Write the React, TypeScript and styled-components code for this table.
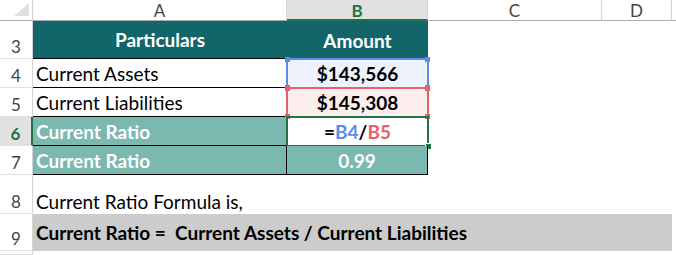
import React from 'react';
import styled, { createGlobalStyle } from 'styled-components';

const GlobalStyle = createGlobalStyle`
  html, body {
    margin: 0;
    padding: 0;
    background: #ffffff;
  }
  body {
    font-family: Lato, "Noto Sans", sans-serif;
  }
`;

const GREEN = '#217346';
const BLUE = '#5b8def';
const RED = '#e8616a';
const DARK_TEAL = '#12666a';
const LIGHT_TEAL = '#7ab8b0';

const Sheet = styled.div`
  display: grid;
  grid-template-columns: 33px 254px 141px 174px 70px 1fr;
  grid-template-rows: 21px 38px 29px 29px 29px 29px 39px 37px 1fr;
  width: 676px;
  height: 255px;
  overflow: hidden;
  font-size: 19px;
  color: #000;
`;

const Corner = styled.div`
  box-sizing: border-box;
  border-right: 1px solid #d4d4d4;
  border-bottom: 1px solid #ababab;
  display: flex;
  align-items: flex-end;
  justify-content: flex-end;
  padding: 0 3px 4px 0;
`;

const ColHeader = styled.div<{ $active?: boolean; $last?: boolean }>`
  box-sizing: border-box;
  display: flex;
  align-items: center;
  justify-content: center;
  background: ${p => (p.$active ? '#e1e1e1' : '#ffffff')};
  border-right: ${p => (p.$last ? 'none' : '1px solid #d4d4d4')};
  border-bottom: ${p => (p.$active ? `2px solid ${GREEN}` : '1px solid #ababab')};
  color: ${p => (p.$active ? GREEN : '#444444')};
  font-weight: ${p => (p.$active ? 700 : 400)};
  font-size: 17px;
  padding-top: ${p => (p.$active ? '1px' : '0')};
`;

const RowHeader = styled.div<{ $active?: boolean }>`
  box-sizing: border-box;
  display: flex;
  align-items: flex-end;
  justify-content: center;
  padding-bottom: 1px;
  background: ${p => (p.$active ? '#e1e1e1' : '#ffffff')};
  border-right: ${p => (p.$active ? `2px solid ${GREEN}` : '1px solid #d4d4d4')};
  border-bottom: 1px solid #e1e1e1;
  color: ${p => (p.$active ? GREEN : '#444444')};
  font-weight: ${p => (p.$active ? 700 : 400)};
  font-size: 17px;
`;

type Edge = 'r' | 'b';

const Cell = styled.div<{
  $bg?: string;
  $color?: string;
  $bold?: boolean;
  $center?: boolean;
  $bottom?: boolean;
  $edges?: Edge[];
  $span?: number;
}>`
  box-sizing: border-box;
  position: relative;
  display: flex;
  align-items: ${p => (p.$bottom ? 'flex-end' : 'center')};
  justify-content: ${p => (p.$center ? 'center' : 'flex-start')};
  padding: ${p => (p.$bottom ? '0 3px 1px 3px' : '0 3px')};
  background: ${p => p.$bg || 'transparent'};
  color: ${p => p.$color || '#000'};
  font-weight: ${p => (p.$bold ? 700 : 400)};
  white-space: nowrap;
  grid-column: ${p => (p.$span ? `span ${p.$span}` : 'auto')};
  border-right: ${p => (p.$edges?.includes('r') ? '1px solid #000' : 'none')};
  border-bottom: ${p => (p.$edges?.includes('b') ? '1px solid #000' : 'none')};
`;

const Marquee = styled.div<{ $color: string }>`
  position: absolute;
  top: -1px;
  left: -1px;
  right: -1px;
  bottom: -1px;
  border: 2px solid ${p => p.$color};
  pointer-events: none;
`;

const Handle = styled.span<{ $color: string; $x: 'l' | 'r'; $y: 't' | 'b' }>`
  position: absolute;
  width: 5px;
  height: 5px;
  background: ${p => p.$color};
  ${p => (p.$x === 'l' ? 'left: -3px;' : 'right: -3px;')}
  ${p => (p.$y === 't' ? 'top: -3px;' : 'bottom: -3px;')}
`;

const FillHandle = styled.span`
  position: absolute;
  right: -4px;
  bottom: -4px;
  width: 5px;
  height: 5px;
  background: ${GREEN};
  border-left: 1px solid #fff;
  border-top: 1px solid #fff;
`;

const Ref = styled.span<{ $color: string }>`
  color: ${p => p.$color};
`;

const Empty = styled.div``;

const RefBox: React.FC<{ color: string }> = ({ color }) => (
  <Marquee $color={color}>
    <Handle $color={color} $x="l" $y="t" />
    <Handle $color={color} $x="r" $y="t" />
    <Handle $color={color} $x="l" $y="b" />
    <Handle $color={color} $x="r" $y="b" />
  </Marquee>
);

const CornerMark = () => (
  <svg width="15" height="13" viewBox="0 0 15 13">
    <polygon points="15,0 15,13 0,13" fill="#dfdfdf" />
  </svg>
);

export default function App() {
  return (
    <>
      <GlobalStyle />
      <Sheet>
        <Corner>
          <CornerMark />
        </Corner>
        <ColHeader>A</ColHeader>
        <ColHeader $active>B</ColHeader>
        <ColHeader>C</ColHeader>
        <ColHeader>D</ColHeader>
        <ColHeader $last />

        <RowHeader>3</RowHeader>
        <Cell $bg={DARK_TEAL} $color="#fff" $bold $center $edges={['b']}>Particulars</Cell>
        <Cell $bg={DARK_TEAL} $color="#fff" $bold $center>Amount</Cell>
        <Empty />
        <Empty />
        <Empty />

        <RowHeader>4</RowHeader>
        <Cell $edges={['b']}>Current Assets</Cell>
        <Cell $bg="#eef2fc" $bold $center>
          $143,566
          <RefBox color={BLUE} />
        </Cell>
        <Empty />
        <Empty />
        <Empty />

        <RowHeader>5</RowHeader>
        <Cell $edges={['b']}>Current Liabilities</Cell>
        <Cell $bg="#fdeeee" $bold $center>
          $145,308
          <RefBox color={RED} />
        </Cell>
        <Empty />
        <Empty />
        <Empty />

        <RowHeader $active>6</RowHeader>
        <Cell $bg={LIGHT_TEAL} $color="#fff" $bold $edges={['b', 'r']}>Current Ratio</Cell>
        <Cell $bold $center>
          =<Ref $color={BLUE}>B4</Ref>/<Ref $color={RED}>B5</Ref>
          <Marquee $color={GREEN}>
            <FillHandle />
          </Marquee>
        </Cell>
        <Empty />
        <Empty />
        <Empty />

        <RowHeader>7</RowHeader>
        <Cell $bg={LIGHT_TEAL} $color="#fff" $bold $edges={['b', 'r']}>Current Ratio</Cell>
        <Cell $bg={LIGHT_TEAL} $color="#fff" $bold $center $edges={['b', 'r']}>0.99</Cell>
        <Empty />
        <Empty />
        <Empty />

        <RowHeader>8</RowHeader>
        <Cell $bottom>Current Ratio Formula is,</Cell>
        <Empty />
        <Empty />
        <Empty />
        <Empty />

        <RowHeader>9</RowHeader>
        <Cell $bg="#cccccc" $bold $span={4}>
          Current Ratio =&nbsp; Current Assets / Current Liabilities
        </Cell>
        <Empty />

        <RowHeader />
        <Empty />
        <Empty />
        <Empty />
        <Empty />
        <Empty />
      </Sheet>
    </>
  );
}
